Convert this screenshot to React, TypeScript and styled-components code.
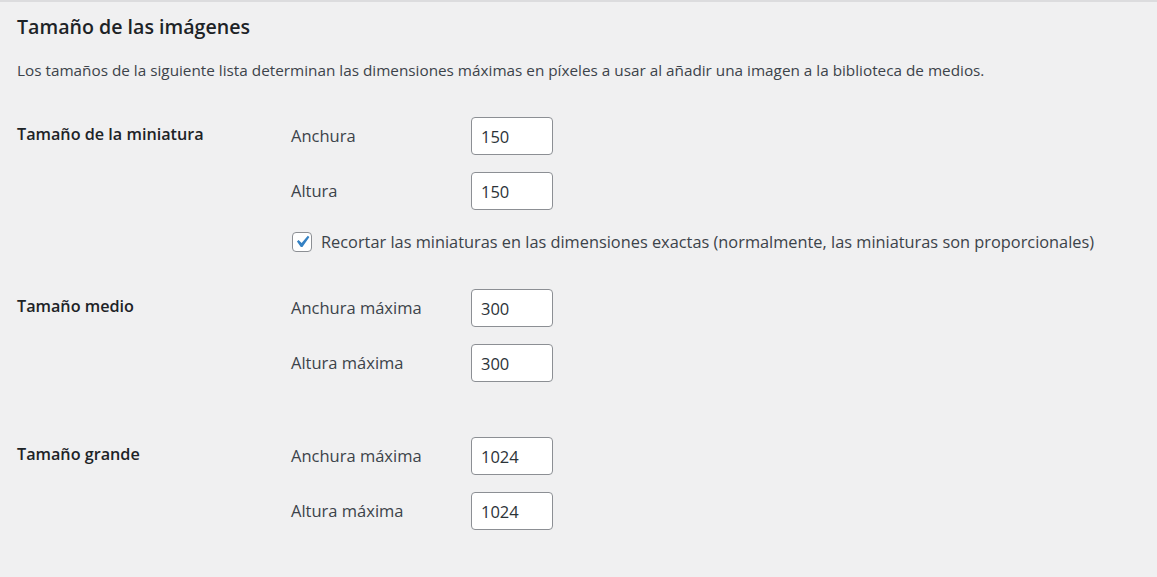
import React from "react";
import styled, { createGlobalStyle } from "styled-components";

const Global = createGlobalStyle`
  html, body { margin: 0; padding: 0; background: #f0f0f1; }
  body { font-family: "Open Sans", "Noto Sans", sans-serif; color: #3c434a; }
`;

const Page = styled.div`
  width: 1157px;
  height: 577px;
  box-sizing: border-box;
  border-top: 2px solid #dcdcde;
  padding: 0 17px;
  overflow: hidden;
`;

const Title = styled.h2`
  margin: 12px 0 0;
  font-size: 19.6px;
  line-height: 26px;
  font-weight: 600;
  color: #1d2327;
`;

const Description = styled.p`
  margin: 20px 0 0;
  font-size: 15.3px;
  line-height: 20px;
  color: #3c434a;
`;

const Section = styled.div<{ $top: number }>`
  display: grid;
  grid-template-columns: 274px 180px 1fr;
  margin-top: ${(p) => p.$top}px;
`;

const SectionLabel = styled.div`
  grid-column: 1;
  grid-row: 1;
  font-size: 16.2px;
  font-weight: 600;
  color: #1d2327;
  line-height: 34px;
  height: 34px;
`;

const FieldLabel = styled.label<{ $row: number }>`
  grid-column: 2;
  grid-row: ${(p) => p.$row};
  font-size: 16.5px;
  line-height: 38px;
  color: #3c434a;
`;

const Input = styled.input<{ $row: number }>`
  grid-column: 3;
  grid-row: ${(p) => p.$row};
  width: 82px;
  height: 38px;
  box-sizing: border-box;
  border: 1px solid #8c8f94;
  border-radius: 4px;
  background: #fff;
  padding: 0 9px;
  font-family: inherit;
  font-size: 16.5px;
  color: #2c3338;
  margin-bottom: 17px;
`;

const CheckRow = styled.label`
  grid-column: 2 / 4;
  display: flex;
  align-items: center;
  gap: 9px;
  font-size: 16.35px;
  line-height: 22px;
  color: #3c434a;
  margin: 4px 0 0 1px;
`;

const Box = styled.span`
  width: 20px;
  height: 20px;
  box-sizing: border-box;
  border: 1px solid #8c8f94;
  border-radius: 4px;
  background: #fff;
  display: inline-flex;
  align-items: center;
  justify-content: center;
  flex-shrink: 0;
`;

const Check = () => (
  <Box>
    <svg width="24" height="24" viewBox="0 0 20 20" style={{ margin: "-3px" }}>
      <path d="M14.83 4.89l1.34.94-5.81 8.38H9.02L5.78 9.67l1.34-1.25 2.57 2.4z" fill="#3582c4" />
    </svg>
  </Box>
);

type Field = { label: string; value: string };

const Group = ({ top, title, fields, children }: { top: number; title: string; fields: Field[]; children?: React.ReactNode }) => (
  <Section $top={top}>
    <SectionLabel>{title}</SectionLabel>
    {fields.map((f, i) => (
      <React.Fragment key={f.label}>
        <FieldLabel $row={i + 1}>{f.label}</FieldLabel>
        <Input $row={i + 1} defaultValue={f.value} readOnly />
      </React.Fragment>
    ))}
    {children}
  </Section>
);

export default function App() {
  return (
    <>
      <Global />
      <Page>
        <Title>Tamaño de las imágenes</Title>
        <Description>
          Los tamaños de la siguiente lista determinan las dimensiones máximas en píxeles a usar al añadir una imagen a la biblioteca de medios.
        </Description>
        <Group
          top={37}
          title="Tamaño de la miniatura"
          fields={[
            { label: "Anchura", value: "150" },
            { label: "Altura", value: "150" },
          ]}
        >
          <CheckRow>
            <Check />
            Recortar las miniaturas en las dimensiones exactas (normalmente, las miniaturas son proporcionales)
          </CheckRow>
        </Group>
        <Group
          top={36}
          title="Tamaño medio"
          fields={[
            { label: "Anchura máxima", value: "300" },
            { label: "Altura máxima", value: "300" },
          ]}
        />
        <Group
          top={38}
          title="Tamaño grande"
          fields={[
            { label: "Anchura máxima", value: "1024" },
            { label: "Altura máxima", value: "1024" },
          ]}
        />
      </Page>
    </>
  );
}
